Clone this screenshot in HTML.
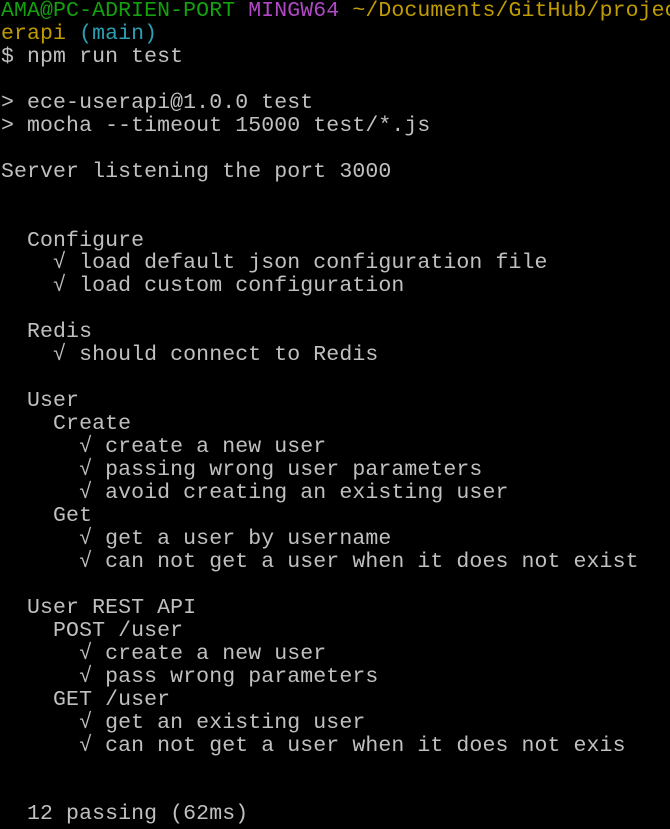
<!DOCTYPE html>
<html><head><meta charset="utf-8"><style>
html,body{margin:0;background:#000;width:670px;height:829px;overflow:hidden}
pre{margin:0;padding:0 0 0 1px;font-family:"Liberation Mono","DejaVu Sans Mono",monospace;font-size:21.5px;letter-spacing:0.11px;line-height:22.95px;color:#c0c0c0;white-space:pre}
.g{color:#13a10e}.m{color:#b148c6}.y{color:#c19c00}.c{color:#2aa1b3}
</style></head><body><pre><span class="g">AMA@PC-ADRIEN-PORT</span> <span class="m">MINGW64</span> <span class="y">~/Documents/GitHub/projec</span>
<span class="y">erapi</span> <span class="c">(main)</span>
$ npm run test

&gt; ece-userapi@1.0.0 test
&gt; mocha --timeout 15000 test/*.js

Server listening the port 3000


  Configure
    √ load default json configuration file
    √ load custom configuration

  Redis
    √ should connect to Redis

  User
    Create
      √ create a new user
      √ passing wrong user parameters
      √ avoid creating an existing user
    Get
      √ get a user by username
      √ can not get a user when it does not exist

  User REST API
    POST /user
      √ create a new user
      √ pass wrong parameters
    GET /user
      √ get an existing user
      √ can not get a user when it does not exis


  12 passing (62ms)
</pre></body></html>
